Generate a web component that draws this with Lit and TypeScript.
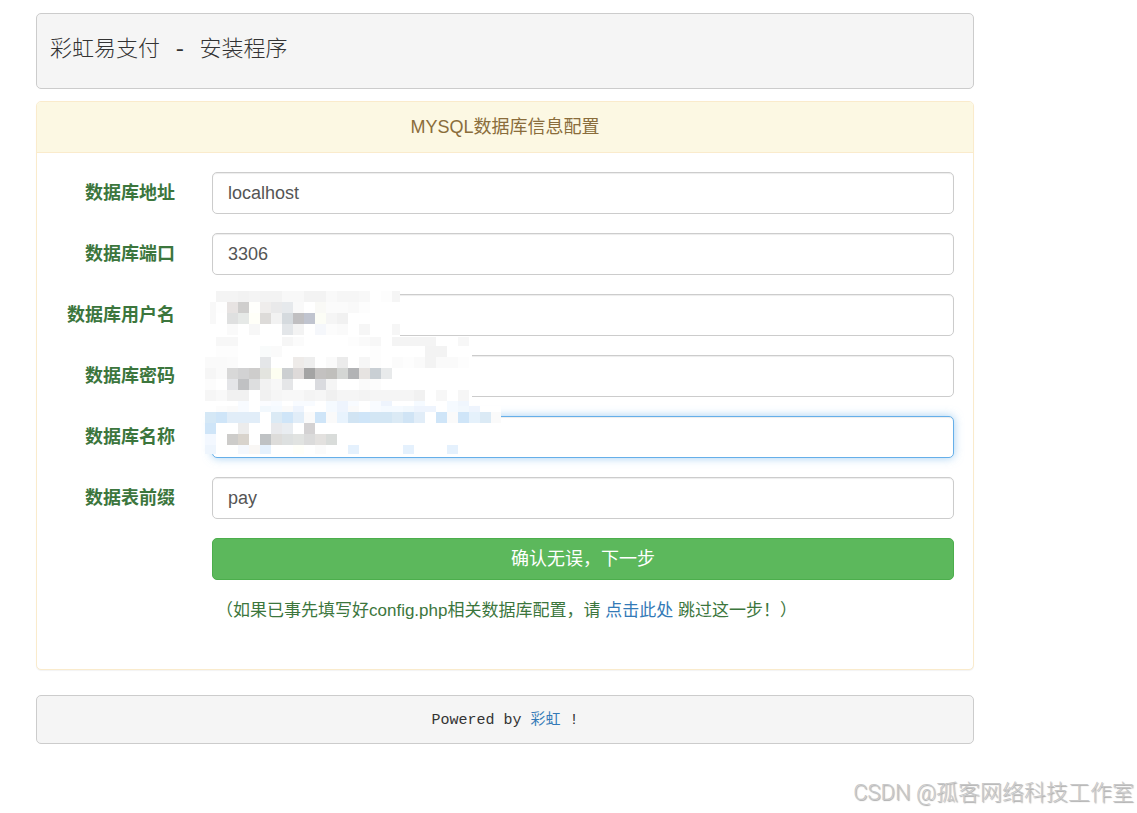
import { LitElement, html, svg, css } from "lit";
import { customElement, property } from "lit/decorators.js";
import { classMap } from "lit/directives/class-map.js";

interface Field {
  id: string;
  label: string;
  value: string;
  type?: string;
  active?: boolean;
}

const FIELDS: Field[] = [
  { id: "db_host", label: "数据库地址", value: "localhost" },
  { id: "db_port", label: "数据库端口", value: "3306" },
  { id: "db_user", label: "数据库用户名", value: "" },
  { id: "db_pwd", label: "数据库密码", value: "", type: "password" },
  { id: "db_name", label: "数据库名称", value: "", active: true },
  { id: "db_qz", label: "数据表前缀", value: "pay" },
];

const CELL = 11;

// One row of the privacy mosaic: top, height, then "column:colour" cells.
type MosaicRow = [number, number, string];

const MOSAIC: MosaicRow[] = [
  [0, 11, "1:f4f4f4 2:f4f4f4 3:f2f2f2 4:f4f4f4 5:f3f3f3 6:f3f3f3 7:f8f8f8 8:f8f8f8 9:f3f3f3 10:f3f3f3 11:f9f9f9 12:f6f6f6 13:f6f6f6 14:f8f8f8 16:fdfdfd 17:f5f5f5"],
  [11, 11, "1:fefefe 2:e7e3e2 3:cfcecd 4:fffffc 5:efedec 6:e9e9ea 7:e6e9ec 8:f9f9f9 10:f9f9f6 11:fbfbfb 12:fbfbfb 13:f9f9f9 14:fdfdfd"],
  [22, 11, "2:dfe0e0 3:e6e9e7 4:fffff8 5:dddbd9 6:f2f2f2 7:d5dade 8:c0bfc1 9:c0c4cf 10:fcfdf6 11:f5f5f5 12:f1f1f1"],
  [33, 11, "2:fafafa 4:f7f7f7 7:e3e6e9 8:f3f3f3 10:f5f7fb 11:fcfcfc 12:fafafa 14:f6f6f6 17:f6f6f6"],
  [46, 9, "1:f7f7f7 2:f7f7f7 7:f6f6f6 8:fbfbfb 13:fdfdfd 14:fafafa 15:f7f7f7 17:f4f4f4 18:f4f4f4 19:f4f4f4 20:f4f4f4 23:f7f7f7"],
  [55, 11, "1:fdfdfd 2:fdfdfd 5:f9fbfb 6:fafafa 15:fdfdfd 20:f3f3f3 21:f3f3f3"],
  [66, 11, "0:fafafa 1:fafafa 2:fbfbfb 5:e4e6e8 8:eeebe9 9:eeeeee 11:fafafa 12:ebebeb 14:f6f6f6 15:fdfdfd 17:fbfbfb 18:fdfdfd 19:fafafa 20:f3f3f3 21:fafafa 22:fafafa 23:fdfdfd"],
  [77, 11, "0:f6f6f6 1:fafafa 2:d8d8d8 3:d2d2d3 4:cecdcc 5:e3e4df 6:fdfef1 7:cccfd1 8:dedad9 9:a4a4a4 10:c3c1c0 11:c0bfbc 12:d4d6d4 13:b2b3b5 14:e6e3e1 15:c9cfd4 16:e8eaeb"],
  [88, 11, "0:fcfcfc 2:e4e5e8 3:c0c1c3 4:dddedf 5:f2f2f2 6:f7f7f7 7:e5e6e8 10:dadbdf 11:f5f5f5 14:fafafa 15:fcfcfc"],
  [99, 11, "0:f6f6f6 1:f9f9f9 2:f1f1f1 3:f1f1f1 5:f1f1f1 6:f6f6f6 7:f8f8f8 8:f8f8f8 9:f4f4f4 10:f6f6f6 11:f0f0f0 12:f5f5f5 13:f5f5f5 14:f3f3f3 15:f5f5f5 16:f5f5f5 17:f5f5f5 18:f5f5f5 19:f1f1f1 21:f7f7f7 23:f6f6f6"],
  [110, 5, "3:f8fbff 5:fbfcff 6:f8fbff 8:f8fbff 9:f8fbff 11:f5faff 12:eef4fd 13:f8fbff 15:f8fbff 16:eef4fd 19:f5faff 22:f5faff 23:f0f6fd"],
  [115, 6, "1:fcfcfc 2:fafafa 3:f8fbff 5:f2f8fd 6:f5faff 7:fafafa 8:eef4fd 11:f5faff 12:eef4fd 13:fafafa 15:f8fbff 16:f5faff 17:f5faff 18:f2f8fd 19:eef4fd 20:eef4fd 22:f5faff 23:f2f8fd 24:eef4fd"],
  [121, 11, "0:d5e8f6 1:cfe5f8 2:e1edf8 3:e1edf8 4:e1edf8 6:dbeaf5 7:cfe5f8 8:e1edf8 9:fafafa 10:cfe5f8 11:fafafa 12:e8f3fd 13:d1e4f3 14:cfe5f8 15:d3e6f4 16:d3e6f4 17:dbeaf5 18:d0e4f5 19:e1edf8 21:cfe5f8 22:fafafa 23:cfe5f8 24:e5f1fb 25:dbeaf5 26:fafafa"],
  [132, 11, "0:cfe5f8 3:ececec 6:e8e9ec 7:e9edf1 9:d4d2d3"],
  [143, 11, "0:f3f8ff 2:cdccca 3:d8d3cc 5:bfc2c4 6:dddcda 7:dde0e0 8:e1e3e1 9:dbdbdb 10:e3e1df 11:d9dcda"],
  [154, 9, "0:eef5fd 3:f5f8fd 4:f9f7f5 5:e5f1fd 8:fffff9 10:fbfbfb 13:e5f1fd 18:e5f1fd 22:e5f1fd"],
];

@customElement("privacy-mosaic")
class PrivacyMosaic extends LitElement {
  static styles = css`
    :host {
      display: block;
      pointer-events: none;
    }
    .tiles {
      display: block;
      shape-rendering: crispEdges;
    }
  `;

  render() {
    return html`
      <svg class="tiles" width="296" height="163" viewBox="0 0 296 163" aria-hidden="true">
        <path fill="#fff" d="M0 0H195V46H267V115H296V132H280V163H0Z" />
        <path fill="#f8f8f8" d="M5 11H11V33H5Z" />
        ${MOSAIC.map(([y, h, cells]) =>
          cells.split(" ").map((cell) => {
            const [col, colour] = cell.split(":");
            const x = Number(col) * CELL;
            const w = y < 46 && x + CELL > 195 ? 195 - x : CELL;
            return svg`<rect x=${x} y=${y} width=${w} height=${h} fill=${"#" + colour} />`;
          })
        )}
      </svg>
    `;
  }
}

@customElement("app-root")
class AppRoot extends LitElement {
  @property({ attribute: false }) fields = FIELDS;

  static styles = css`
    :host {
      display: block;
      box-sizing: border-box;
      padding: 13px 3px 0 36px;
      color: #333;
      font-family: "Liberation Sans", "Noto Sans CJK SC", sans-serif;
      font-size: 18px;
      line-height: 24px;
    }
    * {
      box-sizing: border-box;
    }
    .container {
      max-width: 938px;
    }
    a {
      color: #337ab7;
      text-decoration: none;
    }
    .well {
      background: #f5f5f5;
      border: 1px solid #ccc;
      border-radius: 5px;
      font-family: "Liberation Mono", "Noto Sans CJK SC", monospace;
    }
    .title {
      margin: 0 0 12px;
      padding: 20px 13px;
    }
    .title h1 {
      margin: 0;
      font-size: 22px;
      font-weight: 300;
      line-height: 34px;
    }
    .panel {
      border: 1px solid #faebcc;
      border-radius: 5px;
      box-shadow: 0 1px 1px rgba(0, 0, 0, 0.05);
      background: #fff;
    }
    .panel-heading {
      margin: 0;
      padding: 13px 19px;
      border-bottom: 1px solid #faebcc;
      border-radius: 4px 4px 0 0;
      background: #fcf8e3;
      color: #8a6d3b;
      font-size: 18px;
      font-weight: 400;
      line-height: 24px;
      text-align: center;
    }
    .form {
      position: relative;
      display: grid;
      gap: 19px;
      margin: 19px 19px 46px;
      color: #3c763d;
    }
    .row {
      display: grid;
      grid-template-columns: 119px minmax(0, 1fr);
      column-gap: 37px;
      align-items: center;
    }
    .label {
      font-weight: 700;
      text-align: right;
      white-space: nowrap;
    }
    .control {
      width: 100%;
      height: 42px;
      padding: 8px 15px;
      border: 1px solid #ccc;
      border-radius: 5px;
      outline: none;
      background: #fff;
      box-shadow: inset 0 1px 1px rgba(0, 0, 0, 0.075);
      color: #555;
      font: inherit;
    }
    .control.active {
      border-color: #66afe9;
      box-shadow: inset 0 1px 1px rgba(0, 0, 0, 0.075), 0 0 10px rgba(102, 175, 233, 0.6);
    }
    .submit {
      grid-column: 2;
      height: 42px;
      padding: 0 15px;
      border: 1px solid #4cae4c;
      border-radius: 5px;
      background: #5cb85c;
      color: #fff;
      font: inherit;
      cursor: pointer;
    }
    .hint {
      grid-column: 2;
      margin: 0;
      padding-left: 4px;
      font-size: 17px;
    }
    .mosaic {
      position: absolute;
      left: 149px;
      top: 119px;
    }
    .footer {
      margin-top: 25px;
      padding: 13px 12px 10px;
      font-size: 15px;
      text-align: center;
    }
    .watermark {
      margin: 35px 0 0;
      color: #c8c8c8;
      font-family: Roboto, "Noto Sans CJK SC", sans-serif;
      font-size: 22px;
      font-weight: 300;
      line-height: 28px;
      text-align: right;
      text-shadow: 1px 1px 1px #aaa;
    }
  `;

  private renderField(f: Field) {
    return html`
      <div class="row">
        <label class="label" for=${f.id}>${f.label}</label>
        <input
          class=${classMap({ control: true, active: !!f.active })}
          id=${f.id}
          name=${f.id}
          type=${f.type ?? "text"}
          .value=${f.value}
        />
      </div>
    `;
  }

  render() {
    return html`
      <main class="container">
        <header class="well title"><h1>彩虹易支付 - 安装程序</h1></header>
        <section class="panel">
          <h2 class="panel-heading">MYSQL数据库信息配置</h2>
          <form class="form" @submit=${(e: Event) => e.preventDefault()}>
            ${this.fields.map((f) => this.renderField(f))}
            <div class="row"><button class="submit" type="submit">确认无误，下一步</button></div>
            <div class="row">
              <p class="hint">（如果已事先填写好config.php相关数据库配置，请 <a href="#skip">点击此处</a> 跳过这一步！）</p>
            </div>
            <privacy-mosaic class="mosaic"></privacy-mosaic>
          </form>
        </section>
        <footer class="well footer">Powered by <a href="#home">彩虹</a> !</footer>
      </main>
      <p class="watermark">CSDN @孤客网络科技工作室</p>
    `;
  }
}
